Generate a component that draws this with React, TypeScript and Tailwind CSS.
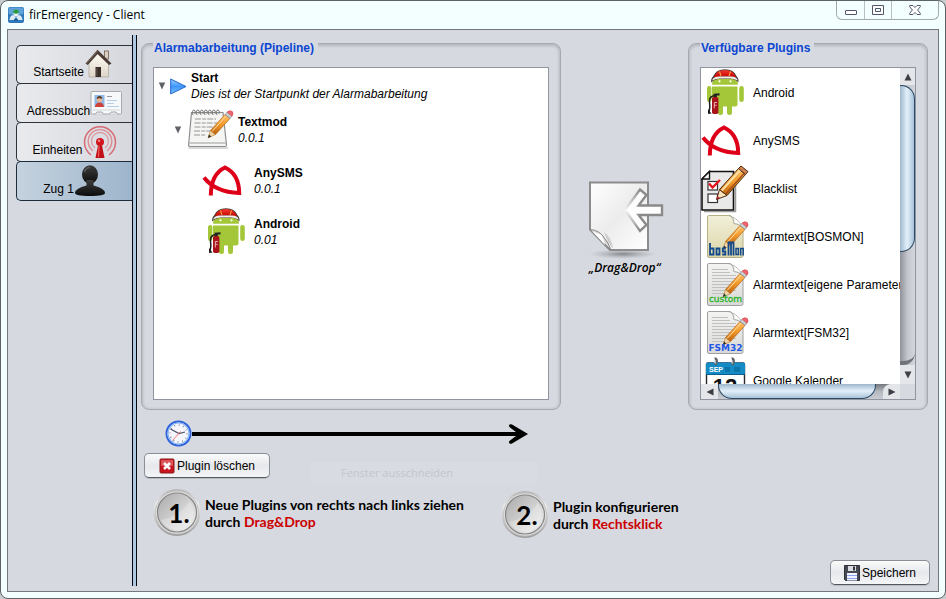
import React from "react";

type IconProps = { className?: string };

function SharedGradients() {
  return (
    <svg className="absolute size-0" aria-hidden="true">
      <defs>
        <linearGradient id="pencil" x1="0" y1="0" x2="0" y2="1">
          <stop offset="0" stopColor="#ffc36a" />
          <stop offset="0.5" stopColor="#f39a2c" />
          <stop offset="1" stopColor="#b9620d" />
        </linearGradient>
        <linearGradient id="paper" x1="0" y1="0" x2="0" y2="1">
          <stop offset="0" stopColor="#f4f4f3" />
          <stop offset="1" stopColor="#d9dad8" />
        </linearGradient>
        <linearGradient id="paperYellow" x1="0" y1="0" x2="0" y2="1">
          <stop offset="0" stopColor="#f1efd9" />
          <stop offset="1" stopColor="#dcd6a8" />
        </linearGradient>
        <linearGradient id="play" x1="0" y1="0" x2="0" y2="1">
          <stop offset="0" stopColor="#9fd0ff" />
          <stop offset="0.5" stopColor="#3d97fb" />
          <stop offset="1" stopColor="#7cc0ff" />
        </linearGradient>
        <linearGradient id="disc" x1="0" y1="0" x2="1" y2="1">
          <stop offset="0" stopColor="#a9a9a9" />
          <stop offset="0.5" stopColor="#cfcfcf" />
          <stop offset="1" stopColor="#f2f2f2" />
        </linearGradient>
        <linearGradient id="rim" x1="0" y1="0" x2="0" y2="1">
          <stop offset="0" stopColor="#b4b4b4" />
          <stop offset="0.3" stopColor="#ececec" />
          <stop offset="1" stopColor="#9a9a9a" />
        </linearGradient>
        <linearGradient id="wall" x1="0" y1="0" x2="0" y2="1">
          <stop offset="0" stopColor="#fffdf6" />
          <stop offset="1" stopColor="#ddd5c6" />
        </linearGradient>
        <linearGradient id="person" x1="0" y1="0" x2="0" y2="1">
          <stop offset="0" stopColor="#3c3c3c" />
          <stop offset="1" stopColor="#0c0c0c" />
        </linearGradient>
        <linearGradient id="helmet" x1="0" y1="0" x2="0" y2="1">
          <stop offset="0" stopColor="#f23a30" />
          <stop offset="1" stopColor="#c80000" />
        </linearGradient>
        <radialGradient id="ground">
          <stop offset="0" stopColor="#6f7276" stopOpacity="0.8" />
          <stop offset="1" stopColor="#9da0a5" stopOpacity="0" />
        </radialGradient>
        <linearGradient id="sheet" x1="0" y1="0" x2="1" y2="1">
          <stop offset="0" stopColor="#ffffff" />
          <stop offset="0.5" stopColor="#ececec" />
          <stop offset="1" stopColor="#ffffff" />
        </linearGradient>
        <linearGradient id="arrowEdge" x1="0" y1="0" x2="1" y2="0">
          <stop offset="0" stopColor="#8a8a8a" stopOpacity="0" />
          <stop offset="0.4" stopColor="#8a8a8a" />
        </linearGradient>
      </defs>
    </svg>
  );
}

function Pencil() {
  return (
    <g>
      <path d="M22 36 L24.5 28.5 L29.5 32.5 Z" fill="#f0d6a6" stroke="#b0752c" strokeWidth="0.6" />
      <path d="M22 36 L23 32.6 L25.2 34.4 Z" fill="#222" />
      <path d="M24.5 28.5 L39 12.5 L44 16.5 L29.5 32.5 Z" fill="url(#pencil)" stroke="#b5691b" strokeWidth="0.7" />
      <path d="M26 29.5 L40.5 13.6" stroke="#ffdca0" strokeWidth="1" />
      <path d="M39 12.5 L41.2 10 L46 14.2 L44 16.5 Z" fill="#c9cbcd" stroke="#85888b" strokeWidth="0.7" />
      <path d="M41.2 10 Q44 7.6 46.3 9.6 Q48 11.8 46 14.2 Z" fill="#f0666e" stroke="#d8434d" strokeWidth="0.6" />
    </g>
  );
}

function AndroidIcon() {
  return (
    <svg viewBox="0 0 48 48" className="size-12 shrink-0" aria-hidden="true">
      <g fill="#a4c739">
        <path d="M11 15.8 Q11.500 6 24 6 Q36.500 6 37 15.800 Z" />
        <path d="M11 17.500 H36.500 V35 Q36.500 37.500 34 37.500 H13.500 Q11 37.500 11 35 Z" />
        <rect x="6" y="17" width="4.400" height="16" rx="2.200" />
        <rect x="38.200" y="17" width="4.600" height="16" rx="2.300" />
        <rect x="17" y="34" width="5" height="12" rx="2.200" />
        <rect x="26" y="34" width="5" height="12" rx="2.200" />
      </g>
      <path d="M10.300 13.500 Q9.500 10 12 7.500 Q15 0.300 24 0.300 Q33 0.300 35.800 7.500 Q38.200 10 37.300 13.500 Q35.500 10.500 31 10 H17 Q12.500 10.500 10.300 13.500 Z" fill="#4b403d" />
      <path d="M12.800 8.200 Q15.500 1 24 1 Q32.500 1 35 8.200 Q24 6.500 12.800 8.200 Z" fill="url(#helmet)" />
      <path d="M11 11.600 Q12.500 7.800 18 7.600 H30 Q35.500 7.800 36.800 11.600 Q32.500 9.400 29 9.400 H19 Q15 9.400 11 11.600 Z" fill="#f3eeea" />
      <path d="M18.500 2.600 L20 7 M29.500 2.600 L28 7" stroke="#ffb43c" strokeWidth="1" />
      <circle cx="18.500" cy="12.300" r="1.100" fill="#fff" />
      <circle cx="29.500" cy="12.300" r="1.100" fill="#fff" />
      <path d="M14 26.500 Q8 27 8.500 33 Q9.500 38 8 43.500" fill="none" stroke="#1d1d1d" strokeWidth="1.500" />
      <path d="M7 40 L10.500 44.500 L7 45 Z" fill="#1d1d1d" />
      <path d="M12.500 24.800 L18.500 24.200 V26.600 H15.800 V28.500 H12.800 Z" fill="#222" />
      <rect x="11" y="28" width="6.400" height="17" rx="1.800" fill="#a8121a" />
      <path d="M13.300 39.500 V33.500 H16 M13.300 36.300 H15.600" fill="none" stroke="#f6d5d5" strokeWidth="0.800" />
    </svg>
  );
}

function AnySmsIcon() {
  return (
    <svg viewBox="0 0 48 48" className="size-12 shrink-0" aria-hidden="true">
      <path
        d="M8.800 38.500 Q9 17 23 10.500 Q37 17 37.200 36 Q13 35 2 20.500"
        fill="none"
        stroke="#dd0018"
        strokeWidth="4"
      />
    </svg>
  );
}

function BlacklistIcon() {
  return (
    <svg viewBox="0 0 48 48" className="size-12 shrink-0" aria-hidden="true">
      <path d="M3 46.500 H34.500 V20" fill="none" stroke="#9b9b9b" strokeWidth="1.500" />
      <path d="M8.500 6.500 H32.500 V45 H1 V14 Z" fill="#e9e9ea" stroke="#111" strokeWidth="1.600" />
      <path d="M8.500 6.500 V14 H1 Z" fill="#fff" stroke="#111" strokeWidth="1.400" />
      <rect x="7" y="16.500" width="9.500" height="8.500" fill="#fff" stroke="#333" strokeWidth="1.200" />
      <rect x="7" y="29" width="9.500" height="8.500" fill="#fff" stroke="#333" strokeWidth="1.200" />
      <path d="M8 18.500 L11.500 22.500 L19 15" fill="none" stroke="#e8141c" strokeWidth="2.400" />
      <path d="M15.500 34.500 L18.500 24.500 L26 30.500 Z" fill="#f7e2bd" stroke="#4a2c12" strokeWidth="1" />
      <path d="M15.500 34.500 L16.500 31 L19 33 Z" fill="#b3202a" />
      <path d="M18.500 24.500 L37.500 3.500 L44.500 9.500 L26 30.500 Z" fill="url(#pencil)" stroke="#4a2c12" strokeWidth="1" />
      <path d="M20.800 25.500 L39.300 5.200" stroke="#ffe2a8" strokeWidth="2" />
      <path d="M24.800 29 L43 8.500" stroke="#a24b17" strokeWidth="1.400" />
      <path d="M37.500 3.500 L40 1 L47 6.600 L44.500 9.500 Z" fill="#d1814f" stroke="#4a2c12" strokeWidth="1" />
    </svg>
  );
}

function DocIcon({ label }: { label: "bosMon" | "custom" | "FSM32" }) {
  const yellow = label === "bosMon";
  return (
    <svg viewBox="0 0 48 48" className="size-12 shrink-0" aria-hidden="true">
      <path
        d="M8 2.500 H29.500 Q33 5 33 10.500 Q39 11 42 16 V42.500 Q42 44.500 40.500 44.500 H8 Q6.500 44.500 6.500 43 V4 Q6.500 2.500 8 2.500 Z"
        fill={yellow ? "url(#paperYellow)" : "url(#paper)"}
        stroke={yellow ? "#b5b184" : "#9fa19e"}
        strokeWidth="1"
      />
      {!yellow && (
        <path
          d="M11 8.500 H27 M11 11.500 H29 M11 14.500 H35 M11 17.500 H35 M11 20.500 H35 M11 23.500 H35 M11 26.500 H35 M11 29.500 H35 M11 32.500 H30"
          stroke="#bfc1be"
          strokeWidth="1.200"
        />
      )}
      <path d="M28 2.500 Q33 3 33 10.500 Q39.500 10.500 42 16.500 Q40.500 7 28 2.500 Z" fill="#fcfcfa" stroke="#a9aaa5" strokeWidth="0.800" />
      <Pencil />
      {label === "bosMon" && (
        <g fill="none" stroke="#12498c" strokeWidth="1.800">
          <path d="M9 30 V41.500 H12.500 V35.500 H9" />
          <path d="M15.500 35.500 H18.500 V41.500 H15.500 Z" />
          <path d="M24.800 35.500 H21.800 V38.500 H24.300 V41.500 H21.200" />
          <path d="M27.500 42.500 V29.500 H30 V42.500 M32.500 42.500 V29.500 H30" />
          <path d="M35 35.500 H37.400 V41.500 H35 Z" strokeWidth="1.500" />
          <path d="M39.700 42.500 V35.500 H42.200 V42.500" strokeWidth="1.500" />
        </g>
      )}
      {label === "custom" && (
        <text x="24.500" y="41" textAnchor="middle" fontSize="9" className="fill-[#25b325] stroke-[#25b325] stroke-[0.3px] font-['DejaVu_Sans',sans-serif]">
          custom
        </text>
      )}
      {label === "FSM32" && (
        <text x="24.500" y="42" textAnchor="middle" fontSize="9" fontWeight="700" className="fill-[#2257e6] font-['DejaVu_Sans',sans-serif]">
          FSM32
        </text>
      )}
    </svg>
  );
}

function CalendarIcon() {
  return (
    <svg viewBox="0 0 48 48" className="size-12 shrink-0" aria-hidden="true">
      <rect x="5.500" y="6" width="38" height="40" rx="1.500" fill="#fff" stroke="#2b2b2b" strokeWidth="1.400" />
      <rect x="5" y="5.500" width="39" height="12" rx="1.500" fill="#148bc4" />
      <path d="M5 17.500 H44" stroke="#0b5f8d" />
      <path d="M24 10 h5 v5 h-5 z M33 10 h6 v5 h-6 z" fill="#0d74a9" />
      <text x="8" y="15" fontSize="7" fontWeight="700" className="fill-white font-['Liberation_Sans',sans-serif]">
        SEP
      </text>
      <path d="M13.500 1.500 Q16.500 1.500 15.500 5.500 L14 8 M30.500 1.500 Q33.500 1.500 32.500 5.500 L31 8" fill="none" stroke="#5b6167" strokeWidth="2.400" />
      <path d="M13.500 1.500 Q12.500 4 14.500 6.500 M30.500 1.500 Q29.500 4 31.500 6.500" fill="none" stroke="#e8ebee" strokeWidth="1.200" />
      <text x="24" y="37" textAnchor="middle" fontSize="22" fontWeight="700" className="fill-[#111] font-['Liberation_Sans',sans-serif]">
        12
      </text>
    </svg>
  );
}

function NotepadIcon() {
  return (
    <svg viewBox="0 0 48 48" className="size-12 shrink-0" aria-hidden="true">
      <path d="M2.500 41 H42 V43 H2.500 Z" fill="#d9d9d9" />
      <path d="M5.500 6.500 H37 L40.500 39 Q40.500 40.500 39 40.500 H4 Q2.500 40.500 2.600 39 Z" fill="#f5f5f4" stroke="#8d8f8c" strokeWidth="1.200" />
      <path d="M3.200 37 H40" stroke="#b9bab8" strokeWidth="1.400" />
      <path d="M9 13 H30 M8.500 17 H31 M8.500 21 H28 M8 25 H24 M8 29 H20" stroke="#b5b7b4" strokeWidth="1.300" strokeDasharray="6 1.200 4 1" />
      <path
        d="M7 9 q-1.500 -5 1 -5 q2 0 1 4 M11 9 q-1.500 -5 1 -5 q2 0 1 4 M15 9 q-1.500 -5 1 -5 q2 0 1 4 M19 9 q-1.500 -5 1 -5 q2 0 1 4 M23 9 q-1.500 -5 1 -5 q2 0 1 4 M27 9 q-1.500 -5 1 -5 q2 0 1 4 M31 9 q-1.500 -5 1 -5 q2 0 1 4"
        fill="none"
        stroke="#77797a"
        strokeWidth="1"
      />
      <g transform="translate(0 -4)">
        <Pencil />
      </g>
    </svg>
  );
}

function HouseIcon() {
  return (
    <svg viewBox="0 0 32 32" className="size-8 shrink-0" aria-hidden="true">
      <rect x="20.500" y="3" width="4" height="8" fill="#d9cfc3" stroke="#6d5a4e" strokeWidth="0.800" />
      <path d="M5 15 L14.500 5 L24.500 15 V29 H5 Z" fill="url(#wall)" stroke="#a39a8d" strokeWidth="0.600" />
      <rect x="11.500" y="19" width="5.500" height="10" fill="#3a2e28" />
      <path d="M13 20 V28" stroke="#65564c" />
      <path d="M1.500 15.500 L13.500 1.800 L27.500 15.500 L25 17 L13.500 6 L3.800 17 Z" fill="#4a3b34" />
      <path d="M2.500 15.500 L13.500 3" stroke="#8d7b70" strokeWidth="0.800" />
    </svg>
  );
}

function AddressCardIcon() {
  return (
    <svg viewBox="0 0 32 32" className="size-8 shrink-0" aria-hidden="true">
      <path d="M2 4.500 H30.500 Q31.500 4.500 31.500 5.500 V26 Q31.500 27 30.500 27 H2 Q1 27 1 26 V5.500 Q1 4.500 2 4.500 Z" fill="#f7f8fa" stroke="#a6a9ae" strokeWidth="1" />
      <path d="M5 27.500 L7 25 H12 L14 27.500 M19 27.500 L21 25 H26 L28 27.500" fill="#e3e5e9" stroke="#a6a9ae" strokeWidth="1" />
      <rect x="4.500" y="8" width="10" height="12" fill="#8fb8e6" />
      <path d="M5 20 Q5.500 15.500 9.500 15.500 Q13.500 15.500 14 20 Z" fill="#cf4138" />
      <circle cx="9.500" cy="12.500" r="2.800" fill="#e7b795" />
      <path d="M6.700 12 Q7 9 9.500 9 Q12 9 12.300 12 Q9.500 10.500 6.700 12 Z" fill="#5a3a26" />
      <path d="M17 9.500 H22" stroke="#9a9a9a" />
      <path d="M17 13.500 H27 M17 16.500 H24 M17 19.500 H29" stroke="#b4cdea" />
      <path d="M2 23 H30" stroke="#d3d6da" />
    </svg>
  );
}

function AntennaIcon() {
  return (
    <svg viewBox="0 0 34 34" className="-my-px size-[34px] shrink-0" aria-hidden="true">
      <g fill="none" strokeLinecap="round">
        <path d="M7.500 29.500 A15.500 15.500 0 1 1 26.500 29.500" stroke="#d56a72" strokeWidth="1.500" />
        <path d="M9.500 25.500 A11.800 11.800 0 1 1 24.500 25.500" stroke="#df8990" strokeWidth="1.400" />
        <path d="M11.500 22.500 A8.500 8.500 0 1 1 22.500 22.500" stroke="#dd9aa0" strokeWidth="1.300" />
      </g>
      <circle cx="17" cy="17" r="4" fill="#d3141c" />
      <circle cx="16" cy="15.800" r="1.300" fill="#f58a8a" />
      <path d="M15 20.500 H19 L21.500 33 H12.500 Z" fill="#c10f17" />
      <path d="M16 21 L15.500 32" stroke="#ef5a5a" strokeWidth="1.200" />
    </svg>
  );
}

function PersonIcon() {
  return (
    <svg viewBox="0 0 32 32" className="size-8 shrink-0" aria-hidden="true">
      <ellipse cx="16" cy="9.500" rx="8" ry="9.300" fill="url(#person)" />
      <path d="M12.500 15 H19.500 V20.500 Q30.500 23 31 28 Q31 31 16 31 Q1 31 1 28 Q1.500 23 12.500 20.500 Z" fill="url(#person)" />
      <path d="M10.500 7 Q12 2.500 16 2.500" fill="none" stroke="#5b5b5b" strokeWidth="1.500" />
    </svg>
  );
}

function AppIcon() {
  return (
    <svg viewBox="0 0 16 16" className="size-4 shrink-0" aria-hidden="true">
      <rect width="16" height="16" rx="2" fill="#2f78ba" />
      <rect x="0.500" y="0.500" width="15" height="7" rx="2" fill="#5da2d8" />
      <path d="M1.500 13 Q2 8.500 5 8 L8 10 L11 8 Q14 8.500 14.500 13 H10.500 L8 10.500 L5.500 13 Z" fill="#dceaf5" />
      <circle cx="8" cy="6.800" r="2.600" fill="#e9f2f8" />
      <path d="M5 5.800 Q5.500 2.500 8 2.500 Q10.500 2.500 11 5.800 L8 7 Z" fill="#2d9a3e" />
      <path d="M6 14 L8 10 L10 14 Z" fill="#1e5f9c" />
    </svg>
  );
}

function StepDisc({ value }: { value: string }) {
  return (
    <span className="relative grid size-12 shrink-0 place-items-center">
      <svg viewBox="0 0 48 48" className="absolute inset-0 size-12" aria-hidden="true">
        <circle cx="24" cy="23.500" r="23.500" fill="url(#rim)" />
        <circle cx="24" cy="23.500" r="21.500" fill="#e3e3e3" stroke="#c2c2c2" />
        <circle cx="24" cy="23.500" r="19.500" fill="url(#disc)" stroke="#858585" strokeWidth="1.200" />
        <path d="M8 31 Q26 28 37 12 Q44 24 37 35 Q24 47 12 36 Z" fill="#ffffff" opacity="0.25" />
      </svg>
      <span className="relative pl-1 font-['Lato',sans-serif] text-[26px] leading-6 font-bold">{value}</span>
    </span>
  );
}

function TreeToggle({ label }: { label: string }) {
  return (
    <button type="button" aria-label={label} aria-expanded="true" className="grid h-4 w-[9px] shrink-0 place-items-center">
      <svg viewBox="0 0 8 8" className="size-2" aria-hidden="true">
        <path d="M0.800 0.500 H7.200 L4 7.500 Z" fill="#5f6266" />
      </svg>
    </button>
  );
}

function NodeText({ title, detail }: { title: string; detail: string }) {
  return (
    <div className="leading-4 whitespace-nowrap">
      <div className="font-bold">{title}</div>
      <div className="italic">{detail}</div>
    </div>
  );
}

const tabs = [
  { label: "Startseite", icon: <HouseIcon />, active: false },
  { label: "Adressbuch", icon: <AddressCardIcon />, active: false },
  { label: "Einheiten", icon: <AntennaIcon />, active: false },
  { label: "Zug 1", icon: <PersonIcon />, active: true },
];

const plugins = [
  { label: "Android", icon: <AndroidIcon /> },
  { label: "AnySMS", icon: <AnySmsIcon /> },
  { label: "Blacklist", icon: <BlacklistIcon /> },
  { label: "Alarmtext[BOSMON]", icon: <DocIcon label="bosMon" /> },
  { label: "Alarmtext[eigene Parameter]", icon: <DocIcon label="custom" /> },
  { label: "Alarmtext[FSM32]", icon: <DocIcon label="FSM32" /> },
  { label: "Google Kalender", icon: <CalendarIcon /> },
];

function Panel({ title, children }: { title: string; children: React.ReactNode }) {
  return (
    <fieldset className="flex h-full min-h-0 min-w-0 flex-col rounded-lg border border-[#a6a9af] px-[11px] pt-[11px] pb-[9px] shadow-[inset_0_1px_3px_1px_rgba(0,0,0,0.16)]">
      <legend className="bg-[#d6d9df] pt-2.5 pr-1 pl-px leading-4 font-bold text-[#0b46d2]">{title}</legend>
      {children}
    </fieldset>
  );
}

function ScrollArrow({ label, path, className }: IconProps & { label: string; path: string }) {
  return (
    <button type="button" aria-label={label} className={`grid shrink-0 place-items-center bg-[#e4e6ea] ${className}`}>
      <svg viewBox="0 0 8 8" className="size-2" aria-hidden="true">
        <path d={path} fill="#3c3f43" />
      </svg>
    </button>
  );
}

function PluginList() {
  return (
    <div className="grid min-h-0 flex-1 grid-cols-[minmax(0,1fr)_15px] grid-rows-[minmax(0,1fr)_15px] border border-[#8f949e] bg-[#d6d9df]">
      <ul className="overflow-hidden bg-white pt-px">
        {plugins.map((p) => (
          <li key={p.label} className="flex h-12 items-center gap-1 whitespace-nowrap">
            {p.icon}
            {p.label}
          </li>
        ))}
      </ul>
      <div className="flex min-h-0 flex-col bg-linear-to-r from-[#8f9299] via-[#c3c6cc] to-[#d3d6dc]">
        <ScrollArrow label="Nach oben" path="M0.500 7.500 H7.500 L4 0.500 Z" className="h-[17px]" />
        <div className="basis-[167px] rounded-tr-[14px] rounded-br-[14px] border border-l-0 border-[#2c4966] bg-linear-to-r from-[#9fb7cc] via-[#e3f0fb] to-[#a9c3d9]" />
        <div className="flex-1 rounded-br-xl border-b-4 border-[#6f7279]" />
        <ScrollArrow label="Nach unten" path="M0.500 0.500 H7.500 L4 7.500 Z" className="h-[19px]" />
      </div>
      <div className="flex min-w-0 bg-linear-to-b from-[#74777d] via-[#b4b7bd] to-[#c9ccd2]">
        <ScrollArrow label="Nach links" path="M7.500 0.500 V7.500 L0.500 4 Z" className="w-[17px]" />
        <div className="flex-1 rounded-br-[14px] rounded-bl-[14px] border border-t-0 border-[#2c4966] bg-linear-to-b from-[#9fb7cc] via-[#e3f0fb] to-[#a9c3d9]" />
        <div className="w-[7px]" />
        <ScrollArrow label="Nach rechts" path="M0.500 0.500 V7.500 L7.500 4 Z" className="w-[17px] rounded-tl-lg" />
      </div>
      <div />
    </div>
  );
}

function DragDropHint() {
  return (
    <div className="flex min-w-0 flex-col items-center justify-center pt-4">
      <svg viewBox="0 0 78 80" className="h-20 w-[78px]" aria-hidden="true">
        <ellipse cx="37" cy="74" rx="34" ry="5" fill="url(#ground)" />
        <path d="M4 2.500 H62 V70 H24 L4 49.500 Z" fill="url(#sheet)" stroke="#8c8c8c" strokeWidth="2" />
        <path d="M4 49.500 Q14 50 19 59 Q22 62 25 70 Z" fill="#d9d9d9" stroke="#8a8a8a" />
        <path d="M6 51 Q12 54 15 54.500 Q18 59 19 65 Z" fill="#fff" />
        <path d="M18 52 Q26 58 27 69 L22 62 Z" fill="#8c8c8c" opacity="0.35" />
        <path d="M39 30 L54 9.500 L60.500 15 L52.500 25.500 H76 V35 H52.500 L60.500 45 L54 51 Z" fill="#fdfdfd" stroke="url(#arrowEdge)" strokeWidth="2.400" />
      </svg>
      <div className="font-['Open_Sans',sans-serif] leading-4 font-semibold italic">„Drag&amp;Drop“</div>
    </div>
  );
}

function ArrowLine() {
  return (
    <div className="mt-2.5 ml-6 flex h-[27px] w-[363px] items-center">
      <svg viewBox="0 0 27 27" className="size-[27px] shrink-0" aria-hidden="true">
        <circle cx="13.500" cy="13.500" r="12" fill="#f4f6fb" stroke="#2d62dd" strokeWidth="2" />
        <circle cx="13.500" cy="13.500" r="10.500" fill="none" stroke="#8db4f2" strokeWidth="1.200" />
        <circle cx="13.500" cy="13.500" r="8.500" fill="none" stroke="#6b7488" strokeWidth="1.500" strokeDasharray="0.800 3.650" />
        <path d="M5.500 9 L14 13.500 L20 12" fill="none" stroke="#4b5366" strokeWidth="1.200" />
        <path d="M15.500 11.500 L7.500 20.500" stroke="#f06a6a" strokeWidth="0.900" />
      </svg>
      <div className="-mr-4 h-1 flex-1 bg-black" />
      <svg viewBox="0 0 22 22" className="size-[22px] shrink-0" aria-hidden="true">
        <path d="M3.500 1.600 Q5 0.800 6 1.600 L22 11 L6 20.400 Q5 21.200 3.500 20.400 Q2 18.800 4 17.500 L10 13 V9 L4 4.500 Q2 3.200 3.500 1.600 Z" fill="#000" />
      </svg>
    </div>
  );
}

const actionButton =
  "flex h-[25px] shrink-0 items-center justify-center rounded-[5px] border border-[#8a8f97] border-b-[#54585f] bg-linear-to-b from-[#fbfbfc] via-[#e6e8eb] to-[#f4f5f7] text-[12px] shadow-[0_1px_0_#b9bcc2]";

export default function App() {
  return (
    <div className="h-screen bg-[#c9cccd] font-['Liberation_Sans',Arial,sans-serif] text-[12px] leading-4 text-black">
      <SharedGradients />
      <div className="flex h-full flex-col rounded-lg border border-[#5c6265] bg-[#f3fffe]">
        <header className="flex h-7 shrink-0 items-start justify-between pl-[7px]">
          <div className="flex items-center gap-[5px] pt-1.5">
            <AppIcon />
            <h1 className="font-['Open_Sans',sans-serif] text-[12px] leading-4">firEmergency - Client</h1>
          </div>
          <div className="mr-[6px] flex h-[19px] rounded-b-md border border-t-0 border-[#a3a9ac]">
            <button type="button" aria-label="Minimieren" className="grid w-7 place-items-center border-r border-[#b9bfc1]">
              <svg viewBox="0 0 12 12" className="size-3" aria-hidden="true">
                <rect x="0.500" y="6.500" width="11" height="4" rx="0.500" fill="#fff" stroke="#53566b" />
              </svg>
            </button>
            <button type="button" aria-label="Maximieren" className="grid w-[27px] place-items-center border-r border-[#b9bfc1]">
              <svg viewBox="0 0 12 12" className="size-3" aria-hidden="true">
                <path d="M0.500 1.500 H11.500 V10.500 H0.500 Z M3.500 4.500 V7.500 H8.500 V4.500 Z" fill="#fff" stroke="#53566b" />
              </svg>
            </button>
            <button type="button" aria-label="Schließen" className="grid w-[46px] place-items-center">
              <svg viewBox="0 0 12 12" className="size-3" aria-hidden="true">
                <path d="M0.700 1.500 H4 L6 3.500 L8 1.500 H11.300 V2.700 L8.600 6 L11.300 9.300 V10.500 H8 L6 8.500 L4 10.500 H0.700 V9.300 L3.400 6 L0.700 2.700 Z" fill="#fff" stroke="#53566b" />
              </svg>
            </button>
          </div>
        </header>

        <div className="mx-[6px] mb-[6px] flex min-h-0 flex-1 border border-[#73787b] bg-[#d6d9df]">
          <nav className="w-[124px] shrink-0 pt-[15px] pl-2">
            {tabs.map((t) => (
              <button
                key={t.label}
                type="button"
                aria-current={t.active ? "page" : undefined}
                className={`-mb-px flex h-10 w-full items-end justify-center rounded-l-[5px] border border-r-0 pb-[3px] first:h-[39px] ${
                  t.active
                    ? "border-[#1c2c3d] bg-linear-to-r from-[#c5d2de] to-[#9db5cc]"
                    : "border-[#2d333b] bg-linear-to-r from-[#e9eaed] to-[#d6d8de]"
                }`}
              >
                <span>{t.label}</span>
                {t.icon}
              </button>
            ))}
          </nav>
          <div className="mt-[5px] mb-[5px] w-[5px] shrink-0 border-x border-[#05060f] bg-[#aec8e2]" />

          <main className="flex min-w-0 flex-1 flex-col pr-2 pb-1.5 pl-1">
            <div className="mr-0.5 grid min-h-0 flex-1 grid-cols-[420fr_127fr_240fr] grid-rows-[minmax(0,1fr)]">
              <Panel title="Alarmabarbeitung (Pipeline)">
                <ul className="min-h-0 flex-1 overflow-hidden border border-[#8f949e] bg-white">
                  <li className="flex h-9 items-center pl-[3px]">
                    <TreeToggle label="Start einklappen" />
                    <svg viewBox="0 0 17 17" className="mr-1 ml-1 size-[17px] shrink-0" aria-hidden="true">
                      <path d="M0.700 1 L16 8.500 L0.700 16 Z" fill="url(#play)" stroke="#2467c9" strokeWidth="1" />
                    </svg>
                    <NodeText title="Start" detail="Dies ist der Startpunkt der Alarmabarbeitung" />
                  </li>
                  <li className="flex h-[51px] items-center gap-1 pl-[19px]">
                    <TreeToggle label="Textmod einklappen" />
                    <NotepadIcon />
                    <NodeText title="Textmod" detail="0.0.1" />
                  </li>
                  <li className="flex h-[51px] items-center gap-1 pl-12">
                    <AnySmsIcon />
                    <NodeText title="AnySMS" detail="0.0.1" />
                  </li>
                  <li className="flex h-[51px] items-center gap-1 pl-12">
                    <AndroidIcon />
                    <NodeText title="Android" detail="0.01" />
                  </li>
                </ul>
              </Panel>
              <DragDropHint />
              <Panel title="Verfügbare Plugins">
                <PluginList />
              </Panel>
            </div>

            <ArrowLine />

            <div className="mt-1.5 flex h-[30px] shrink-0 items-start pl-[3px]">
              <button type="button" className={`${actionButton} w-[126px] gap-0.5`}>
                <svg viewBox="0 0 16 16" className="size-4" aria-hidden="true">
                  <rect x="1" y="1" width="14" height="14" rx="1" fill="#c8141c" stroke="#8c1a1d" />
                  <rect x="2" y="2" width="12" height="6" fill="#dd5357" />
                  <path d="M5 5 L11 11 M11 5 L5 11" stroke="#fff" strokeWidth="2.600" />
                </svg>
                Plugin löschen
              </button>
              <div className="mt-[9px] ml-10 h-[21px] w-[228px] bg-[#d8dbe1] pl-[31px] font-['Open_Sans',sans-serif] text-[11px] leading-[22px] text-[#c3c6cd]">
                Fenster ausschneiden
              </div>
            </div>

            <ol className="mt-1.5 flex h-[50px] shrink-0 items-start pl-3 font-['Lato',sans-serif] text-[14px] leading-[17px] font-bold">
              <li className="flex w-[348px] items-center gap-1">
                <StepDisc value="1." />
                <p className="whitespace-nowrap">
                  Neue Plugins von rechts nach links ziehen
                  <br />
                  durch <span className="text-[#cc0000]">Drag&amp;Drop</span>
                </p>
              </li>
              <li className="flex items-center gap-1 pt-0.5">
                <StepDisc value="2." />
                <p className="whitespace-nowrap">
                  Plugin konfigurieren
                  <br />
                  durch <span className="text-[#cc0000]">Rechtsklick</span>
                </p>
              </li>
            </ol>

            <div className="mt-[21px] flex shrink-0 justify-end">
              <button type="button" className={`${actionButton} w-[100px] gap-0.5`}>
                <svg viewBox="0 0 16 16" className="size-4" aria-hidden="true">
                  <path d="M0.500 0.500 H15.500 V15.500 H1.500 L0.500 14.500 Z" fill="#454a52" stroke="#2d3036" />
                  <rect x="4" y="1" width="8" height="5" fill="#d9dce0" />
                  <rect x="9" y="1.500" width="2" height="4" fill="#33363c" />
                  <rect x="3" y="8" width="10" height="7.500" fill="#f0f3ff" />
                  <path d="M3 10.500 H13 M3 13.500 H13" stroke="#8ea4ee" />
                </svg>
                Speichern
              </button>
            </div>
          </main>
        </div>
      </div>
    </div>
  );
}
